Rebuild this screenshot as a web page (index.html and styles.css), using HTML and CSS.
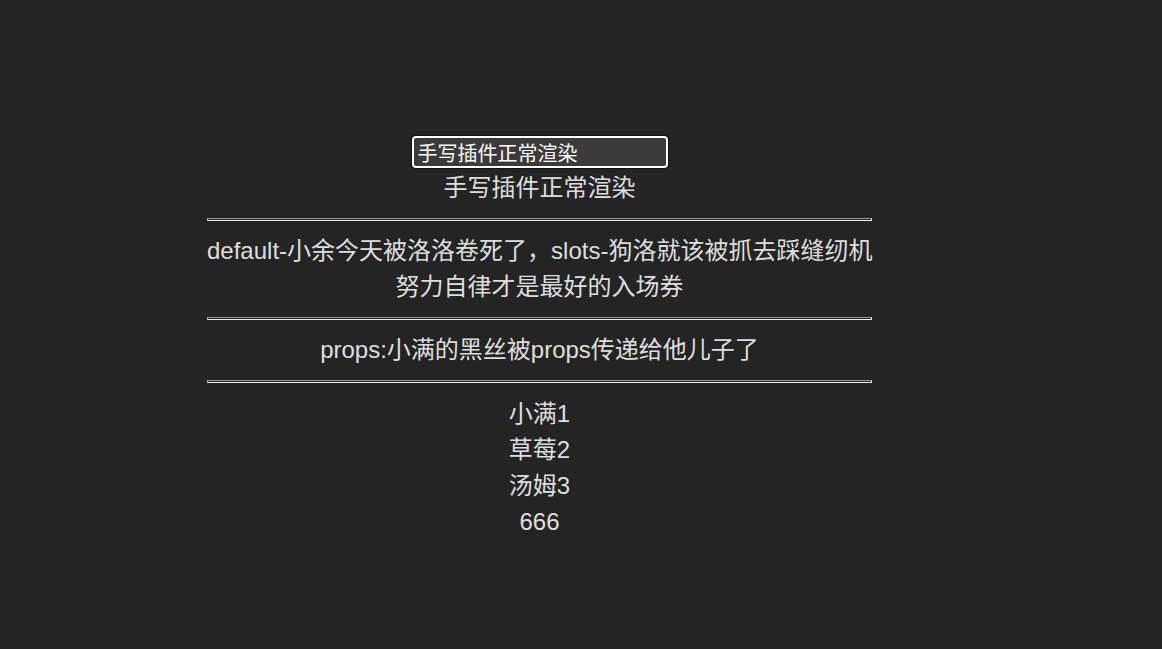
FILE: index.html
```html
<!DOCTYPE html>
<html lang="zh-CN">
<head>
<meta charset="utf-8">
<link rel="stylesheet" href="styles.css">
</head>
<body>
<div class="app">
  <div class="field-row"><input class="field" type="text" value="手写插件正常渲染"></div>
  <div class="line">手写插件正常渲染</div>
  <hr class="rule">
  <div class="line">default-小余今天被洛洛卷死了，slots-狗洛就该被抓去踩缝纫机</div>
  <div class="line">努力自律才是最好的入场券</div>
  <hr class="rule">
  <div class="line">props:小满的黑丝被props传递给他儿子了</div>
  <hr class="rule">
  <div class="list">
    <div class="line">小满1</div>
    <div class="line">草莓2</div>
    <div class="line">汤姆3</div>
    <div class="line">666</div>
  </div>
</div>
</body>
</html>
```
FILE: styles.css
```css
html, body {
  margin: 0;
  padding: 0;
  background: #242424;
}
body {
  color: rgba(255, 255, 255, 0.87);
  font-family: "Liberation Sans", "Noto Sans CJK SC", sans-serif;
  font-size: 24px;
  line-height: 1.5;
}
.app {
  width: 665px;
  margin-left: 207px;
  padding-top: 136px;
  display: flex;
  flex-direction: column;
  align-items: stretch;
  text-align: center;
}
.field-row {
  height: 34px;
  display: flex;
  justify-content: center;
  align-items: flex-start;
}
.field {
  box-sizing: border-box;
  width: 256px;
  height: 32px;
  margin: 0;
  padding: 0 4px;
  background: #3b3b3b;
  border: 2px solid #ffffff;
  border-radius: 4px;
  box-shadow: 0 0 0 1px #111111;
  color: #ffffff;
  font-family: "Liberation Sans", "Noto Sans CJK SC", sans-serif;
  font-size: 20px;
  outline: none;
}
.line {
  height: 36px;
  white-space: nowrap;
}
.rule {
  width: 100%;
  box-sizing: border-box;
  height: 3px;
  margin: 12px 0;
  border-width: 1px;
  border-style: solid;
  border-color: #9a9a9a #eeeeee #eeeeee #9a9a9a;
}
.list {
  padding-top: 1px;
}
```
